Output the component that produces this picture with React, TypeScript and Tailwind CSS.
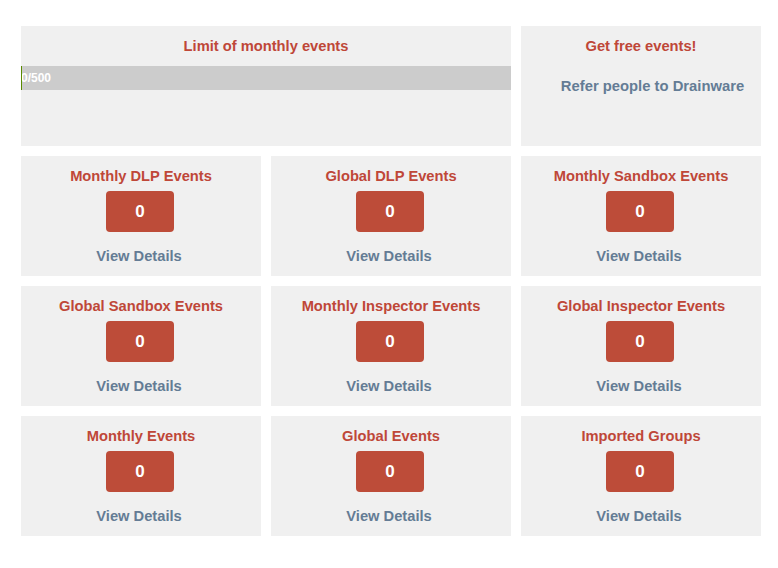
import React from 'react';

const cards = [
  'Monthly DLP Events',
  'Global DLP Events',
  'Monthly Sandbox Events',
  'Global Sandbox Events',
  'Monthly Inspector Events',
  'Global Inspector Events',
  'Monthly Events',
  'Global Events',
  'Imported Groups',
];

function StatCard({ title }: { title: string }) {
  return (
    <div className="h-[120px] bg-[#f0f0f0] flex flex-col items-center pt-[11px]">
      <h3 className="text-[14.7px] leading-[18px] font-bold text-[#bf4738]">{title}</h3>
      <div className="mt-[6px] mr-[2px] w-[68px] h-[41px] rounded-[4px] bg-[#bd4c39] flex items-center justify-center text-white text-[17px] font-bold">
        0
      </div>
      <a href="#" className="mt-[15px] mr-[4px] text-[14.7px] leading-[18px] font-bold text-[#647c95]">
        View Details
      </a>
    </div>
  );
}

export default function App() {
  return (
    <div className="min-h-screen bg-white font-['Liberation_Sans',Arial,sans-serif] pt-[26px] px-[21px]">
      <div className="w-[740px] grid grid-cols-3 gap-[10px]">
        <div className="col-span-2 h-[120px] bg-[#f0f0f0] flex flex-col pt-[11px]">
          <h3 className="text-center text-[14.7px] leading-[18px] font-bold text-[#bf4738]">
            Limit of monthly events
          </h3>
          <div className="mt-[11px] h-[24px] bg-[#cccccc] relative flex items-center">
            <div className="absolute left-0 top-0 h-full w-px bg-[#5a8a00]" />
            <span className="text-white text-[12px] font-bold leading-none">0/500</span>
          </div>
        </div>
        <div className="h-[120px] bg-[#f0f0f0] flex flex-col items-center pt-[11px]">
          <h3 className="text-[14.7px] leading-[18px] font-bold text-[#bf4738]">Get free events!</h3>
          <a href="#" className="mt-[22px] pl-[23px] text-[14.8px] leading-[18px] font-bold text-[#647c95]">
            Refer people to Drainware
          </a>
        </div>
        {cards.map((c) => (
          <StatCard key={c} title={c} />
        ))}
      </div>
    </div>
  );
}
